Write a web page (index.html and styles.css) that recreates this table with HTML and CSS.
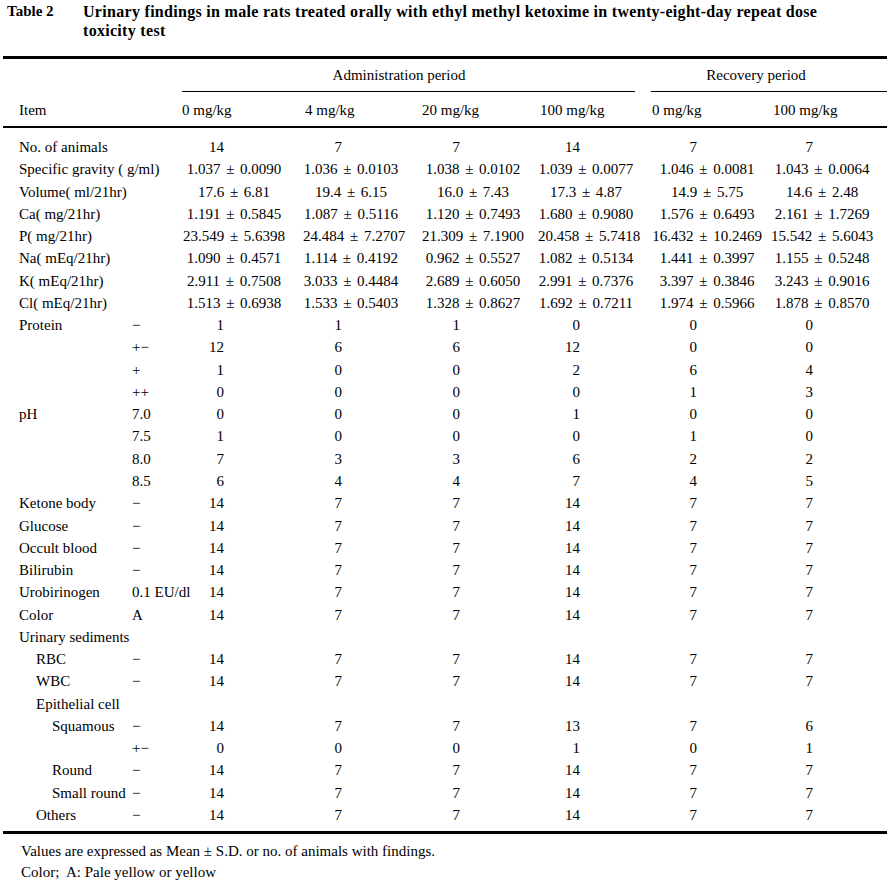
FILE: index.html
```html
<!DOCTYPE html>
<html lang="en">
<head>
<meta charset="utf-8">
<title>Table 2</title>
<link rel="stylesheet" href="styles.css">
</head>
<body>
<div class="page">
  <div class="caption">
    <span class="cap-label">Table 2</span>
    <span class="cap-text">Urinary findings in male rats treated orally with ethyl methyl ketoxime in twenty-eight-day repeat dose<br>toxicity test</span>
  </div>

  <table class="data">
    <colgroup>
      <col class="c-item"><col class="c-sub">
      <col class="c-d1"><col class="c-d2"><col class="c-d3"><col class="c-d4"><col class="c-d5"><col class="c-d6">
    </colgroup>
    <thead>
      <tr class="groups">
        <th colspan="2"></th>
        <th colspan="4"><div class="grp grp-admin">Administration period</div></th>
        <th colspan="2"><div class="grp grp-rec">Recovery period</div></th>
      </tr>
      <tr class="doses">
        <th colspan="2" class="item-h">Item</th>
        <th>0 mg/kg</th><th>4 mg/kg</th><th>20 mg/kg</th><th>100 mg/kg</th>
        <th>0 mg/kg</th><th>100 mg/kg</th>
      </tr>
    </thead>
    <tbody>
      <tr class="cnt"><td colspan="2" class="lbl">No. of animals</td><td>14</td><td>7</td><td>7</td><td>14</td><td>7</td><td>7</td></tr>
      <tr class="pm"><td colspan="2" class="lbl">Specific gravity ( g/ml)</td><td>1.037 ± 0.0090</td><td>1.036 ± 0.0103</td><td>1.038 ± 0.0102</td><td>1.039 ± 0.0077</td><td>1.046 ± 0.0081</td><td>1.043 ± 0.0064</td></tr>
      <tr class="pm"><td colspan="2" class="lbl">Volume( ml/21hr)</td><td>17.6 ± 6.81</td><td>19.4 ± 6.15</td><td>16.0 ± 7.43</td><td>17.3 ± 4.87</td><td>14.9 ± 5.75</td><td>14.6 ± 2.48</td></tr>
      <tr class="pm"><td colspan="2" class="lbl">Ca( mg/21hr)</td><td>1.191 ± 0.5845</td><td>1.087 ± 0.5116</td><td>1.120 ± 0.7493</td><td>1.680 ± 0.9080</td><td>1.576 ± 0.6493</td><td>2.161 ± 1.7269</td></tr>
      <tr class="pm"><td colspan="2" class="lbl">P( mg/21hr)</td><td>23.549 ± 5.6398</td><td>24.484 ± 7.2707</td><td>21.309 ± 7.1900</td><td>20.458 ± 5.7418</td><td>16.432 ± 10.2469</td><td>15.542 ± 5.6043</td></tr>
      <tr class="pm"><td colspan="2" class="lbl">Na( mEq/21hr)</td><td>1.090 ± 0.4571</td><td>1.114 ± 0.4192</td><td>0.962 ± 0.5527</td><td>1.082 ± 0.5134</td><td>1.441 ± 0.3997</td><td>1.155 ± 0.5248</td></tr>
      <tr class="pm"><td colspan="2" class="lbl">K( mEq/21hr)</td><td>2.911 ± 0.7508</td><td>3.033 ± 0.4484</td><td>2.689 ± 0.6050</td><td>2.991 ± 0.7376</td><td>3.397 ± 0.3846</td><td>3.243 ± 0.9016</td></tr>
      <tr class="pm"><td colspan="2" class="lbl">Cl( mEq/21hr)</td><td>1.513 ± 0.6938</td><td>1.533 ± 0.5403</td><td>1.328 ± 0.8627</td><td>1.692 ± 0.7211</td><td>1.974 ± 0.5966</td><td>1.878 ± 0.8570</td></tr>

      <tr class="cnt"><td class="lbl">Protein</td><td class="sub">−</td><td>1</td><td>1</td><td>1</td><td>0</td><td>0</td><td>0</td></tr>
      <tr class="cnt"><td class="lbl"></td><td class="sub">+−</td><td>12</td><td>6</td><td>6</td><td>12</td><td>0</td><td>0</td></tr>
      <tr class="cnt"><td class="lbl"></td><td class="sub">+</td><td>1</td><td>0</td><td>0</td><td>2</td><td>6</td><td>4</td></tr>
      <tr class="cnt"><td class="lbl"></td><td class="sub">++</td><td>0</td><td>0</td><td>0</td><td>0</td><td>1</td><td>3</td></tr>
      <tr class="cnt"><td class="lbl">pH</td><td class="sub">7.0</td><td>0</td><td>0</td><td>0</td><td>1</td><td>0</td><td>0</td></tr>
      <tr class="cnt"><td class="lbl"></td><td class="sub">7.5</td><td>1</td><td>0</td><td>0</td><td>0</td><td>1</td><td>0</td></tr>
      <tr class="cnt"><td class="lbl"></td><td class="sub">8.0</td><td>7</td><td>3</td><td>3</td><td>6</td><td>2</td><td>2</td></tr>
      <tr class="cnt"><td class="lbl"></td><td class="sub">8.5</td><td>6</td><td>4</td><td>4</td><td>7</td><td>4</td><td>5</td></tr>
      <tr class="cnt"><td class="lbl">Ketone body</td><td class="sub">−</td><td>14</td><td>7</td><td>7</td><td>14</td><td>7</td><td>7</td></tr>
      <tr class="cnt"><td class="lbl">Glucose</td><td class="sub">−</td><td>14</td><td>7</td><td>7</td><td>14</td><td>7</td><td>7</td></tr>
      <tr class="cnt"><td class="lbl">Occult blood</td><td class="sub">−</td><td>14</td><td>7</td><td>7</td><td>14</td><td>7</td><td>7</td></tr>
      <tr class="cnt"><td class="lbl">Bilirubin</td><td class="sub">−</td><td>14</td><td>7</td><td>7</td><td>14</td><td>7</td><td>7</td></tr>
      <tr class="cnt"><td class="lbl">Urobirinogen</td><td class="sub">0.1 EU/dl</td><td>14</td><td>7</td><td>7</td><td>14</td><td>7</td><td>7</td></tr>
      <tr class="cnt"><td class="lbl">Color</td><td class="sub">A</td><td>14</td><td>7</td><td>7</td><td>14</td><td>7</td><td>7</td></tr>
      <tr class="cnt"><td colspan="2" class="lbl">Urinary sediments</td><td></td><td></td><td></td><td></td><td></td><td></td></tr>
      <tr class="cnt"><td class="lbl lv2">RBC</td><td class="sub">−</td><td>14</td><td>7</td><td>7</td><td>14</td><td>7</td><td>7</td></tr>
      <tr class="cnt"><td class="lbl lv2">WBC</td><td class="sub">−</td><td>14</td><td>7</td><td>7</td><td>14</td><td>7</td><td>7</td></tr>
      <tr class="cnt"><td colspan="2" class="lbl lv2">Epithelial cell</td><td></td><td></td><td></td><td></td><td></td><td></td></tr>
      <tr class="cnt"><td class="lbl lv3">Squamous</td><td class="sub">−</td><td>14</td><td>7</td><td>7</td><td>13</td><td>7</td><td>6</td></tr>
      <tr class="cnt"><td class="lbl lv3"></td><td class="sub">+−</td><td>0</td><td>0</td><td>0</td><td>1</td><td>0</td><td>1</td></tr>
      <tr class="cnt"><td class="lbl lv3">Round</td><td class="sub">−</td><td>14</td><td>7</td><td>7</td><td>14</td><td>7</td><td>7</td></tr>
      <tr class="cnt"><td class="lbl lv3">Small round</td><td class="sub">−</td><td>14</td><td>7</td><td>7</td><td>14</td><td>7</td><td>7</td></tr>
      <tr class="cnt last"><td class="lbl lv2">Others</td><td class="sub">−</td><td>14</td><td>7</td><td>7</td><td>14</td><td>7</td><td>7</td></tr>
    </tbody>
  </table>

  <div class="notes">
    <p>Values are expressed as Mean ± S.D. or no. of animals with findings.</p>
    <p>Color;&nbsp; A: Pale yellow or yellow</p>
  </div>
</div>
</body>
</html>
```

FILE: styles.css
```css
* { box-sizing: border-box; }

html, body {
  margin: 0;
  background: #ffffff;
  color: #000000;
}

body {
  font-family: "Liberation Serif", "Times New Roman", serif;
  font-size: 15px;
}

.page {
  width: 891px;
  padding: 2px 0 0 3px;
}

/* caption */
.caption {
  display: flex;
  padding-left: 4px;
  font-weight: bold;
  font-size: 16px;
  line-height: 19px;
}
.cap-label {
  flex: none;
  width: 76px;
  font-size: 15px;
}
.cap-text {
  letter-spacing: 0.3px;
}

/* table */
.data {
  margin-top: 16px;
  width: 884px;
  table-layout: fixed;
  border-collapse: separate;
  border-spacing: 0;
}
.c-item { width: 127px; }
.c-sub  { width: 50px; }
.c-d1   { width: 123px; }
.c-d2   { width: 117px; }
.c-d3   { width: 118px; }
.c-d4   { width: 112px; }
.c-d5   { width: 121px; }
.c-d6   { width: 116px; }

.data th,
.data td {
  padding: 0;
  font-weight: normal;
  white-space: nowrap;
  vertical-align: top;
}

.groups th {
  border-top: 3px solid #000;
}
.grp {
  line-height: 32px;
  border-bottom: 1px solid #000;
  text-align: center;
}
.grp-admin {
  margin: 0 15px 0 2px;
  padding-right: 19px;
}
.grp-rec {
  margin: 0 0 0 1px;
  padding-right: 26px;
}

.doses th {
  line-height: 31px;
  padding-top: 3px;
  text-align: left;
  padding-left: 2px;
  border-bottom: 2px solid #000;
}
.doses th.item-h { padding-left: 16px; }

/* body rows */
.data td {
  line-height: 22.27px;
}
.data tbody tr:first-child td { padding-top: 8px; }
.data tbody tr.last td {
  padding-bottom: 5px;
  border-bottom: 3px solid #000;
}

td.lbl { padding-left: 16px; }
td.lbl.lv2 { padding-left: 33px; }
td.lbl.lv3 { padding-left: 49px; }
td.sub { padding-left: 2px; }

/* counts: right-aligned */
.cnt td:nth-last-child(-n+6) { text-align: right; }
.cnt td:nth-last-child(6) { padding-right: 79px; }
.cnt td:nth-last-child(5) { padding-right: 78px; }
.cnt td:nth-last-child(4) { padding-right: 78px; }
.cnt td:nth-last-child(3) { padding-right: 70px; }
.cnt td:nth-last-child(2) { padding-right: 74px; }
.cnt td:nth-last-child(1) { padding-right: 74px; }

/* mean ± sd: centred */
.pm td:nth-last-child(-n+6) { text-align: center; word-spacing: 2px; }
.pm td:nth-last-child(6) { padding-right: 15px; }
.pm td:nth-last-child(5) { padding-right: 21px; }
.pm td:nth-last-child(4) { padding-right: 12px; }
.pm td:nth-last-child(3) { padding-right: 16px; }
.pm td:nth-last-child(2) { padding-right: 7px; }
.pm td:nth-last-child(1) { padding-right: 14px; }

/* notes */
.notes {
  margin-top: 7px;
  padding-left: 18px;
  line-height: 21px;
}
.notes p { margin: 0; }
```
